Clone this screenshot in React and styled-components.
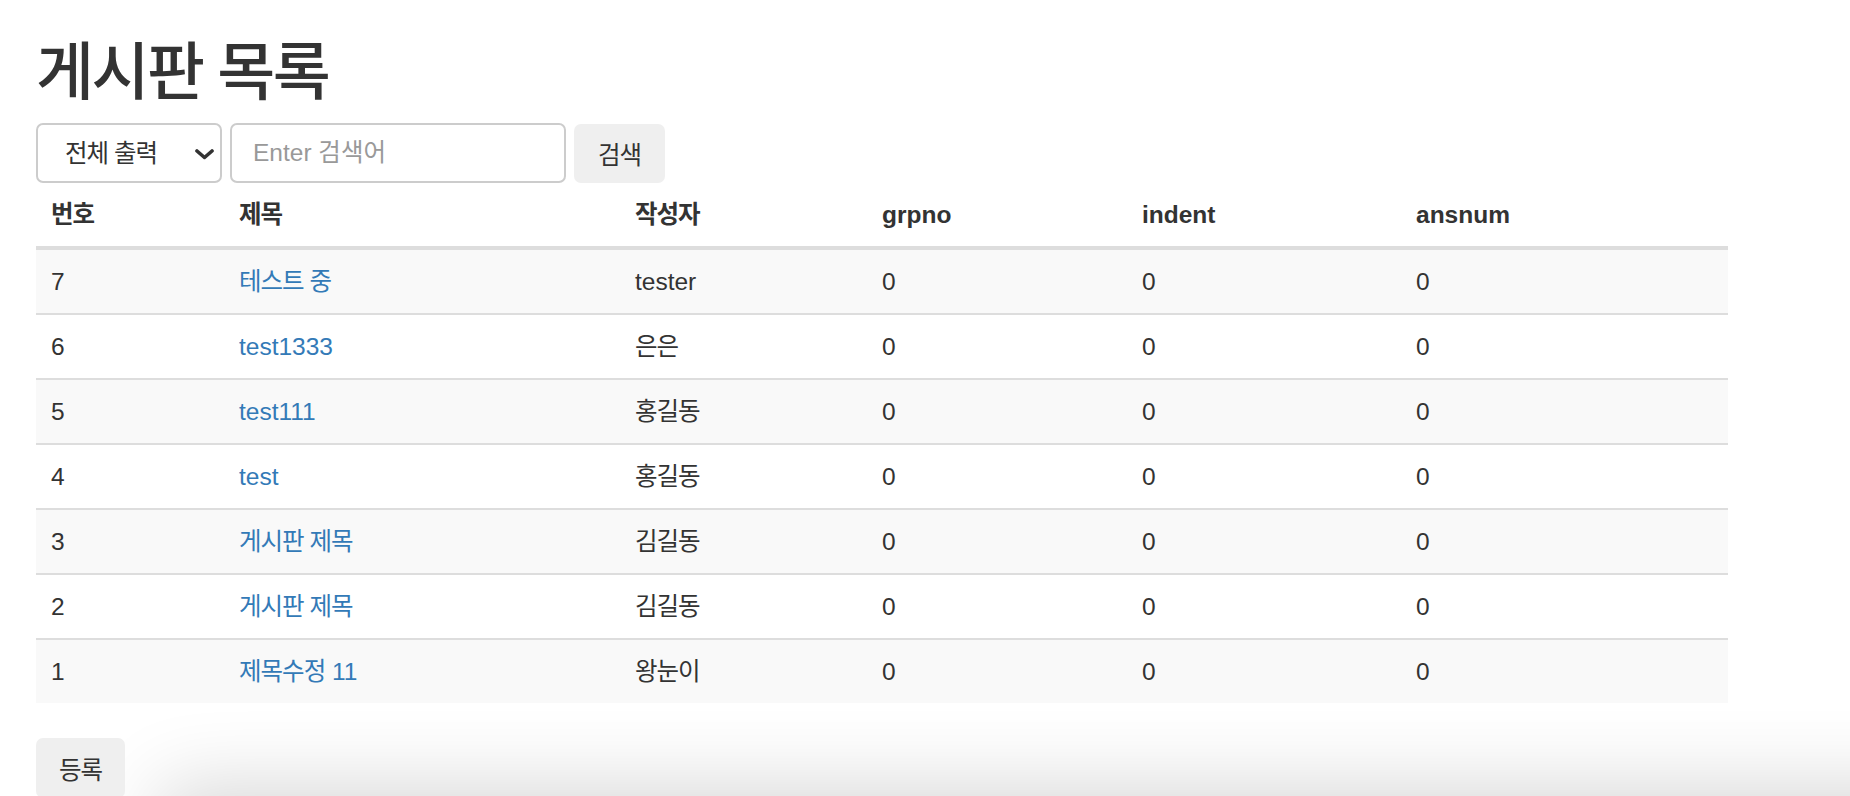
import React from 'react';
import styled, { createGlobalStyle } from 'styled-components';

const GlobalStyle = createGlobalStyle`
  html, body {
    margin: 0;
    padding: 0;
    background: #ffffff;
  }
  body {
    font-family: "Liberation Sans", "Noto Sans CJK KR", Arial, sans-serif;
    font-size: 24.5px;
    color: #333333;
    overflow: hidden;
  }
`;

const Page = styled.div`
  padding: 0 36px;
  width: 1692px;
`;

const Title = styled.h1`
  margin: 37px 0 16px;
  font-size: 63px;
  line-height: 70px;
  font-weight: 500;
  color: #333;
`;

// Hangul in the reference is a touch narrower than Noto Sans CJK
const Ko = styled.span`
  letter-spacing: -0.04em;
`;

const SearchForm = styled.form`
  display: flex;
  align-items: center;
  gap: 8px;
  height: 60px;
`;

const SelectBox = styled.div`
  position: relative;
  width: 186px;
  height: 60px;
`;

const Select = styled.select`
  appearance: none;
  width: 100%;
  height: 100%;
  box-sizing: border-box;
  padding: 0 0 0 27px;
  border: 2px solid #cccccc;
  border-radius: 7px;
  background: #fff;
  font-family: inherit;
  font-size: 24.5px;
  color: #333;
  letter-spacing: -0.04em;
  outline: none;
`;

const Chevron = styled.svg`
  position: absolute;
  right: 8px;
  top: 26px;
  width: 19px;
  height: 11px;
  pointer-events: none;
`;

const SearchInput = styled.input`
  width: 336px;
  height: 60px;
  box-sizing: border-box;
  padding: 0 21px;
  border: 2px solid #cccccc;
  border-radius: 7px;
  font-family: inherit;
  font-size: 24.5px;
  color: #333;
  outline: none;
  &::placeholder {
    color: #999999;
  }
`;

const Button = styled.button`
  height: ${({ $tall }) => ($tall ? '60px' : '59px')};
  padding: 0 ${({ $wide }) => ($wide ? '23px' : '24px')};
  border: none;
  border-radius: 7px;
  background: #efefef;
  font-family: inherit;
  font-size: 24.5px;
  color: #333;
  cursor: pointer;
`;

const Table = styled.table`
  width: 1692px;
  border-collapse: collapse;
  border-spacing: 0;
  margin-bottom: 35px;
`;

const HeadCell = styled.th`
  text-align: left;
  font-weight: 700;
  padding: 14px 15px;
  line-height: 35px;
  border-bottom: 4px solid #dddddd;
  color: #333;
`;

const Row = styled.tr`
  background: ${({ $striped }) => ($striped ? '#f9f9f9' : '#ffffff')};
`;

const Cell = styled.td`
  padding: 14px 15px;
  line-height: 35px;
  vertical-align: top;
  border-top: 2px solid #dddddd;
`;

const TitleLink = styled.a`
  color: #337ab7;
  text-decoration: none;
`;

const Footer = styled.div`
  position: relative;
  z-index: 2;
`;

const BottomShade = styled.div`
  position: fixed;
  left: 170px;
  right: -200px;
  top: 100vh;
  height: 200px;
  box-shadow: 0 0 80px 10px rgba(0, 0, 0, 0.16);
  z-index: 1;
`;

const columns = [188, 396, 247, 260, 274, 327];

const posts = [
  { no: 7, title: <Ko>테스트 중</Ko>, writer: 'tester' },
  { no: 6, title: 'test1333', writer: <Ko>은은</Ko> },
  { no: 5, title: 'test111', writer: <Ko>홍길동</Ko> },
  { no: 4, title: 'test', writer: <Ko>홍길동</Ko> },
  { no: 3, title: <Ko>게시판 제목</Ko>, writer: <Ko>김길동</Ko> },
  { no: 2, title: <Ko>게시판 제목</Ko>, writer: <Ko>김길동</Ko> },
  { no: 1, title: <><Ko>제목수정</Ko> 11</>, writer: <Ko>왕눈이</Ko> },
];

export default function App() {
  return (
    <>
      <GlobalStyle />
      <Page>
        <Title>
          <Ko>게시판 목록</Ko>
        </Title>

        <SearchForm onSubmit={(e) => e.preventDefault()}>
          <SelectBox>
            <Select defaultValue="all">
              <option value="all">전체 출력</option>
              <option value="title">제목</option>
              <option value="writer">작성자</option>
            </Select>
            <Chevron viewBox="0 0 19 11">
              <path
                d="M2 2 L9.5 8.5 L17 2"
                fill="none"
                stroke="#333"
                strokeWidth="3.6"
                strokeLinecap="round"
                strokeLinejoin="round"
              />
            </Chevron>
          </SelectBox>
          <SearchInput placeholder="Enter 검색어" />
          <Button type="submit">
            <Ko>검색</Ko>
          </Button>
        </SearchForm>

        <Table>
          <colgroup>
            {columns.map((w, i) => (
              <col key={i} style={{ width: w }} />
            ))}
          </colgroup>
          <thead>
            <tr>
              <HeadCell><Ko>번호</Ko></HeadCell>
              <HeadCell><Ko>제목</Ko></HeadCell>
              <HeadCell><Ko>작성자</Ko></HeadCell>
              <HeadCell>grpno</HeadCell>
              <HeadCell>indent</HeadCell>
              <HeadCell>ansnum</HeadCell>
            </tr>
          </thead>
          <tbody>
            {posts.map((p, i) => (
              <Row key={p.no} $striped={i % 2 === 0}>
                <Cell>{p.no}</Cell>
                <Cell>
                  <TitleLink href="#">{p.title}</TitleLink>
                </Cell>
                <Cell>{p.writer}</Cell>
                <Cell>0</Cell>
                <Cell>0</Cell>
                <Cell>0</Cell>
              </Row>
            ))}
          </tbody>
        </Table>

        <Footer>
          <Button type="button" $tall $wide>
            <Ko>등록</Ko>
          </Button>
        </Footer>
      </Page>
      <BottomShade />
    </>
  );
}
